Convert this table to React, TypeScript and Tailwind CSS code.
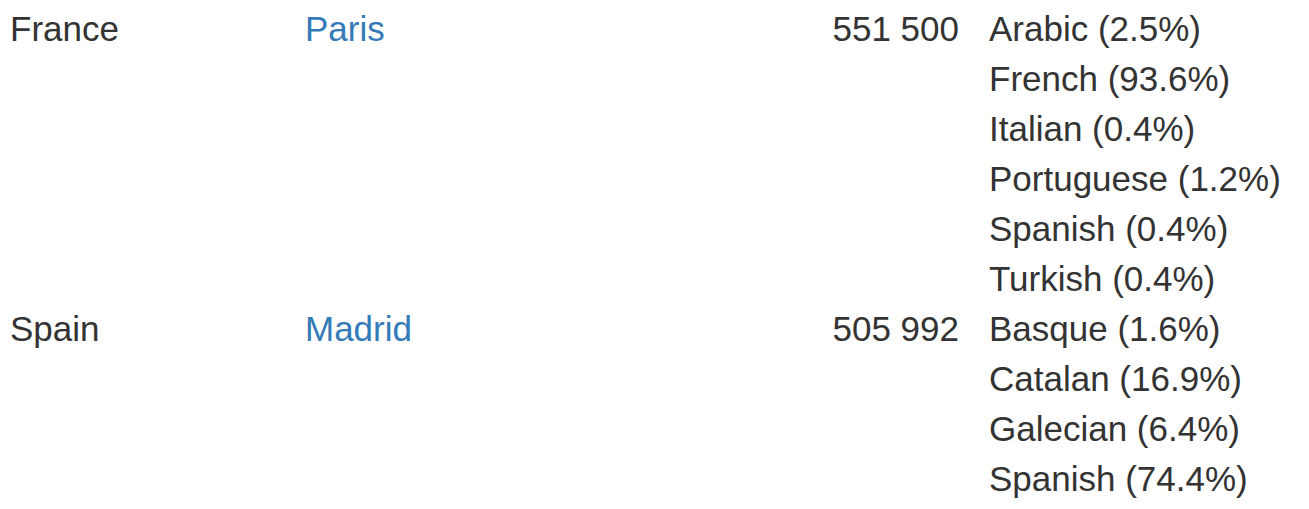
import React from 'react';

interface Country {
  name: string;
  capital: string;
  area: string;
  languages: string[];
}

const countries: Country[] = [
  {
    name: 'France',
    capital: 'Paris',
    area: '551 500',
    languages: ['Arabic (2.5%)', 'French (93.6%)', 'Italian (0.4%)', 'Portuguese (1.2%)', 'Spanish (0.4%)', 'Turkish (0.4%)'],
  },
  {
    name: 'Spain',
    capital: 'Madrid',
    area: '505 992',
    languages: ['Basque (1.6%)', 'Catalan (16.9%)', 'Galecian (6.4%)', 'Spanish (74.4%)'],
  },
];

export default function App() {
  return (
    <div
      className="min-h-[509px] w-[1309px] bg-white pt-[4px] pl-[10px] text-[35px] leading-[50px] text-[#333333]"
      style={{ fontFamily: '"Liberation Sans", Arial, sans-serif' }}
    >
      {countries.map((c) => (
        <div key={c.name} className="flex items-start">
          <div className="w-[295px] shrink-0">{c.name}</div>
          <div className="w-[520px] shrink-0">
            <a href="#" className="text-[#337ab7] no-underline">
              {c.capital}
            </a>
          </div>
          <div className="w-[134px] shrink-0 text-right">{c.area}</div>
          <div className="pl-[30px]">
            {c.languages.map((l) => (
              <div key={l}>{l}</div>
            ))}
          </div>
        </div>
      ))}
    </div>
  );
}
